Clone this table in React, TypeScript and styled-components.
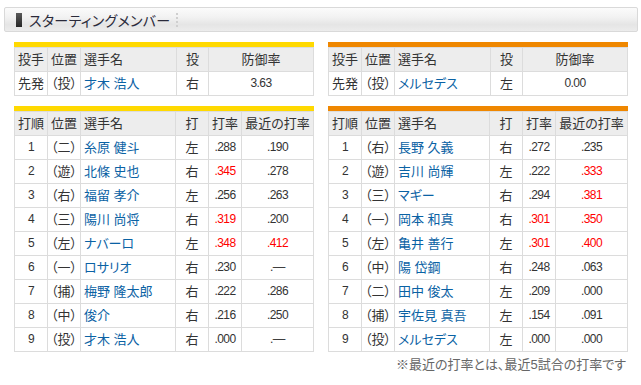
import React from "react";
import styled, { createGlobalStyle } from "styled-components";

const Global = createGlobalStyle`
  html, body { margin: 0; padding: 0; background: #fff; }
  body {
    font-family: "Liberation Sans", "Noto Sans CJK JP", sans-serif;
    font-feature-settings: "palt";
    color: #333;
  }
`;

const Page = styled.div`
  width: 641px;
  box-sizing: border-box;
  padding: 7px 3px 0 4px;
`;

const TitleBar = styled.div`
  width: 634px;
  height: 25px;
  box-sizing: border-box;
  border: 1px solid #d9d9d9;
  border-radius: 2px;
  background: linear-gradient(#fbfbfb 0%, #f2f2f2 40%, #e5e5e5 72%, #ececec 100%);
  display: flex;
  align-items: center;
  padding-left: 11px;
`;

const TitleMark = styled.span`
  width: 6px;
  height: 14px;
  background: linear-gradient(#5a5a5a, #262626);
  margin-right: 7px;
`;

const TitleText = styled.h2`
  margin: 0;
  font-size: 14px;
  font-weight: normal;
  color: #2a2a3a;
  font-family: "Noto Sans CJK JP", sans-serif;
  letter-spacing: 0.3px;
`;

const TitleSep = styled.span`
  margin-left: 6px;
  width: 0;
  height: 14px;
  border-left: 2px dotted #cfcfcf;
`;

const Grid = styled.div`
  display: grid;
  grid-template-columns: 300px 300px;
  column-gap: 14px;
  row-gap: 10px;
  margin: 10px 0 0 10px;
`;

const Block = styled.div<{ $accent: string }>`
  border-top: 5px solid ${(p) => p.$accent};
`;

const Table = styled.table`
  width: 300px;
  border-collapse: collapse;
  table-layout: fixed;
  font-size: 13px;
`;

const Th = styled.th<{ $align?: string }>`
  height: 23px;
  padding: 0 3px;
  border: 1px solid #dcdcdc;
  background: #ededed;
  font-weight: normal;
  text-align: ${(p) => p.$align || "left"};
  color: #333;
  white-space: nowrap;
  line-height: 23px;
`;

const Td = styled.td<{ $align?: string; $red?: boolean; $num?: boolean; $link?: boolean }>`
  height: 23px;
  padding: 0 3px;
  border: 1px solid #dcdcdc;
  background: #fff;
  text-align: ${(p) => p.$align || "left"};
  color: ${(p) => (p.$red ? "#f00" : p.$link ? "#0a62a4" : "#333")};
  font-size: ${(p) => (p.$num ? "12px" : "13px")};
  letter-spacing: ${(p) => (p.$num ? "-0.6px" : "0")};
  white-space: nowrap;
  line-height: 23px;
`;

const NameLink = styled.a`
  color: #0a62a4;
  text-decoration: none;
`;

const Note = styled.p`
  grid-column: 2;
  margin: 0;
  text-align: right;
  font-size: 13px;
  color: #666;
  padding-right: 2px;
  margin-top: -8px;
`;

type Pitcher = { name: string; hand: string; era: string };
type Batter = { pos: string; name: string; hand: string; avg: string; avgRed?: boolean; rec: string; recRed?: boolean };

const NONE = ".\u2013\u2013";

const pitchers: Pitcher[] = [
  { name: "才木 浩人", hand: "右", era: "3.63" },
  { name: "メルセデス", hand: "左", era: "0.00" },
];

const lineups: Batter[][] = [
  [
    { pos: "二", name: "糸原 健斗", hand: "左", avg: ".288", rec: ".190" },
    { pos: "遊", name: "北條 史也", hand: "右", avg: ".345", avgRed: true, rec: ".278" },
    { pos: "右", name: "福留 孝介", hand: "左", avg: ".256", rec: ".263" },
    { pos: "三", name: "陽川 尚将", hand: "右", avg: ".319", avgRed: true, rec: ".200" },
    { pos: "左", name: "ナバーロ", hand: "左", avg: ".348", avgRed: true, rec: ".412", recRed: true },
    { pos: "一", name: "ロサリオ", hand: "右", avg: ".230", rec: NONE },
    { pos: "捕", name: "梅野 隆太郎", hand: "右", avg: ".222", rec: ".286" },
    { pos: "中", name: "俊介", hand: "右", avg: ".216", rec: ".250" },
    { pos: "投", name: "才木 浩人", hand: "右", avg: ".000", rec: NONE },
  ],
  [
    { pos: "右", name: "長野 久義", hand: "右", avg: ".272", rec: ".235" },
    { pos: "遊", name: "吉川 尚輝", hand: "左", avg: ".222", rec: ".333", recRed: true },
    { pos: "三", name: "マギー", hand: "右", avg: ".294", rec: ".381", recRed: true },
    { pos: "一", name: "岡本 和真", hand: "右", avg: ".301", avgRed: true, rec: ".350", recRed: true },
    { pos: "左", name: "亀井 善行", hand: "左", avg: ".301", avgRed: true, rec: ".400", recRed: true },
    { pos: "中", name: "陽 岱鋼", hand: "右", avg: ".248", rec: ".063" },
    { pos: "二", name: "田中 俊太", hand: "左", avg: ".209", rec: ".000" },
    { pos: "捕", name: "宇佐見 真吾", hand: "左", avg: ".154", rec: ".091" },
    { pos: "投", name: "メルセデス", hand: "左", avg: ".000", rec: ".000" },
  ],
];

const accents = ["#ffd900", "#ef8700"];

function PitcherTable({ p, accent }: { p: Pitcher; accent: string }) {
  return (
    <Block $accent={accent}>
      <Table>
        <colgroup>
          <col style={{ width: 33 }} />
          <col style={{ width: 33 }} />
          <col style={{ width: 96 }} />
          <col style={{ width: 32 }} />
          <col />
        </colgroup>
        <thead>
          <tr>
            <Th>投手</Th>
            <Th>位置</Th>
            <Th>選手名</Th>
            <Th $align="center">投</Th>
            <Th $align="center">防御率</Th>
          </tr>
        </thead>
        <tbody>
          <tr>
            <Td>先発</Td>
            <Td>（投）</Td>
            <Td $link><NameLink href="#">{p.name}</NameLink></Td>
            <Td $align="center">{p.hand}</Td>
            <Td $align="center" $num>{p.era}</Td>
          </tr>
        </tbody>
      </Table>
    </Block>
  );
}

function BatterTable({ rows, accent }: { rows: Batter[]; accent: string }) {
  return (
    <Block $accent={accent}>
      <Table>
        <colgroup>
          <col style={{ width: 33 }} />
          <col style={{ width: 33 }} />
          <col style={{ width: 95 }} />
          <col style={{ width: 33 }} />
          <col style={{ width: 33 }} />
          <col />
        </colgroup>
        <thead>
          <tr>
            <Th>打順</Th>
            <Th>位置</Th>
            <Th>選手名</Th>
            <Th $align="center">打</Th>
            <Th $align="center">打率</Th>
            <Th $align="center">最近の打率</Th>
          </tr>
        </thead>
        <tbody>
          {rows.map((r, i) => (
            <tr key={i}>
              <Td $align="center" $num>{i + 1}</Td>
              <Td>（{r.pos}）</Td>
              <Td $link><NameLink href="#">{r.name}</NameLink></Td>
              <Td $align="center">{r.hand}</Td>
              <Td $align="center" $num $red={r.avgRed}>{r.avg}</Td>
              <Td $align="center" $num $red={r.recRed}>{r.rec}</Td>
            </tr>
          ))}
        </tbody>
      </Table>
    </Block>
  );
}

export default function App() {
  return (
    <>
      <Global />
      <Page>
        <TitleBar>
          <TitleMark />
          <TitleText>スターティングメンバー</TitleText>
          <TitleSep />
        </TitleBar>
        <Grid>
          <PitcherTable p={pitchers[0]} accent={accents[0]} />
          <PitcherTable p={pitchers[1]} accent={accents[1]} />
          <BatterTable rows={lineups[0]} accent={accents[0]} />
          <BatterTable rows={lineups[1]} accent={accents[1]} />
          <Note>※最近の打率とは、最近5試合の打率です</Note>
        </Grid>
      </Page>
    </>
  );
}
